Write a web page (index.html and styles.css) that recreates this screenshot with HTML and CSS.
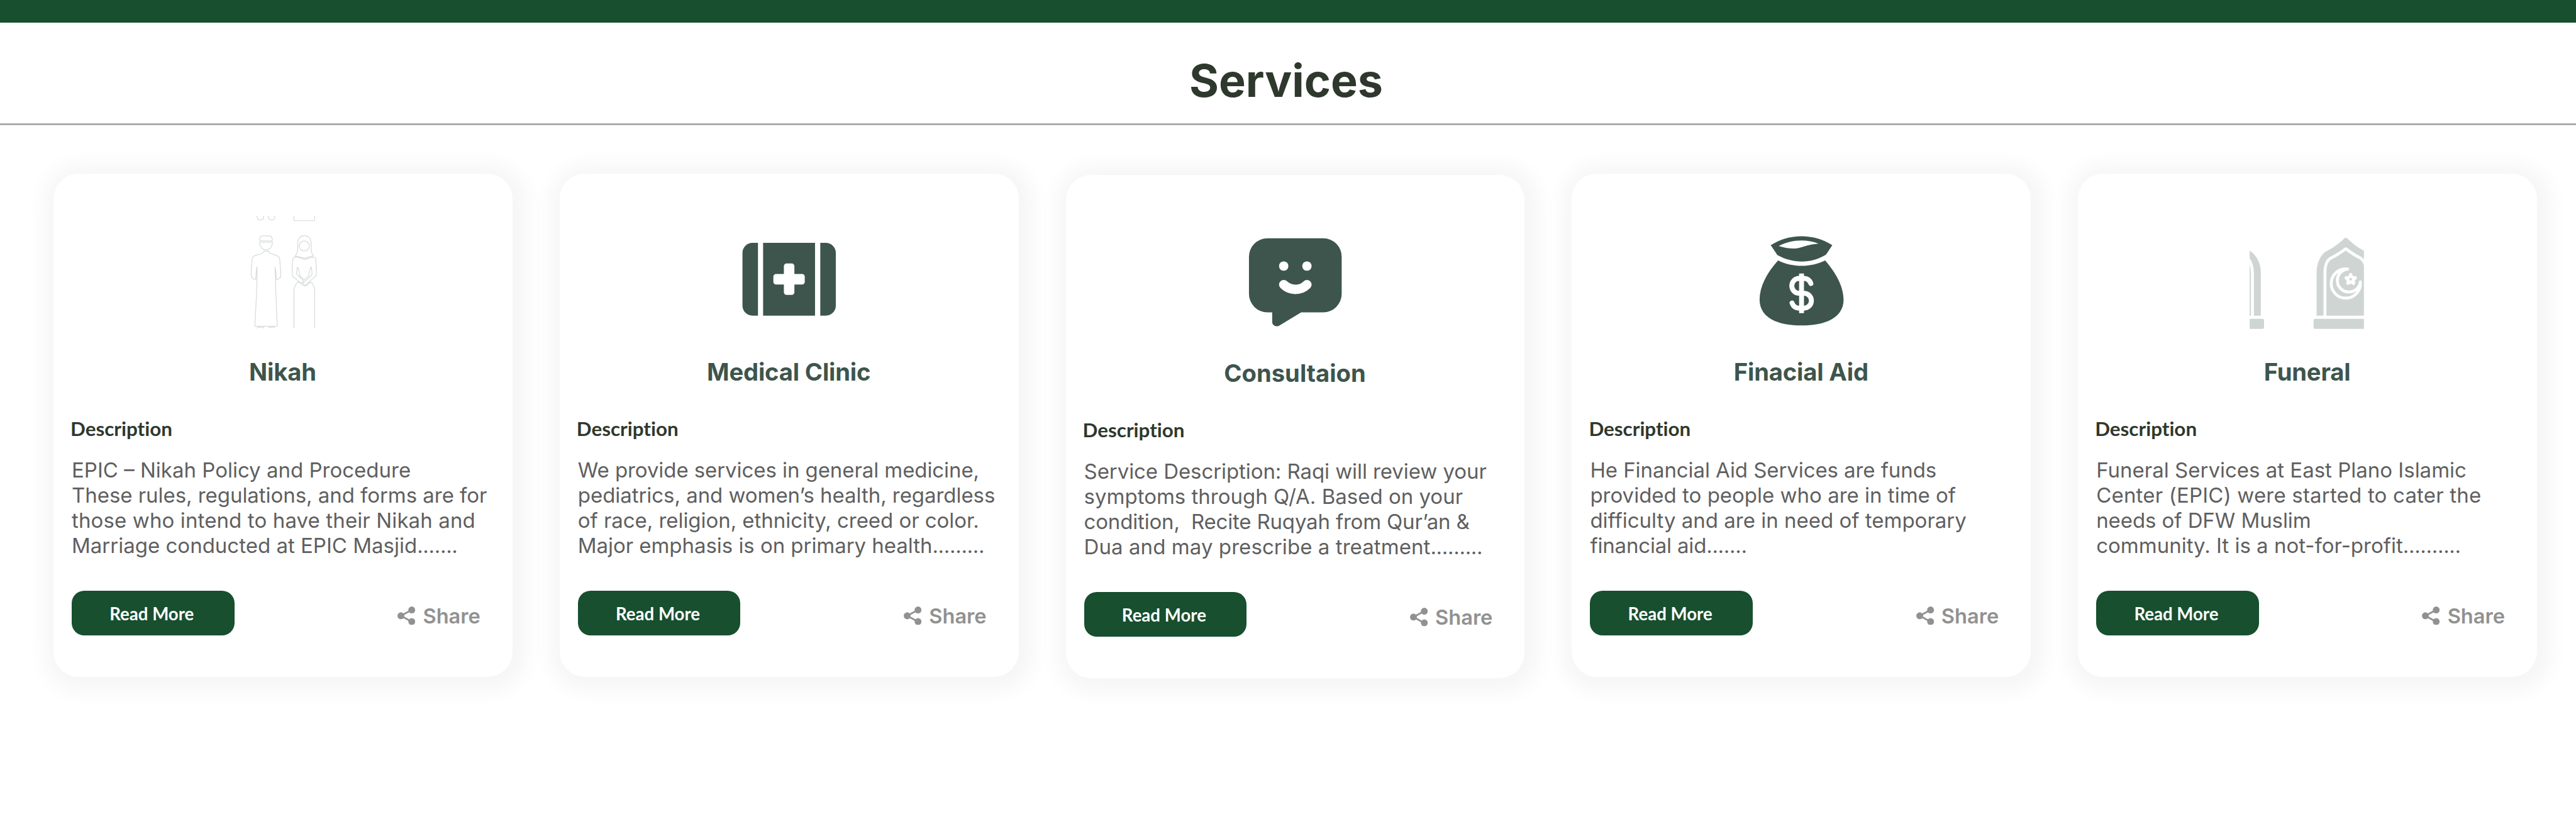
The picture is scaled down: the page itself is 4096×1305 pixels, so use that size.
FILE: index.html
```
<!DOCTYPE html>
<html lang="en">
<head>
<meta charset="utf-8">
<title>Services</title>
<link rel="stylesheet" href="styles.css">
</head>
<body>
<svg class="sprite" aria-hidden="true">
  <symbol id="share" viewBox="0 0 46.4 48.4">
    <path d="M37.3 8.8 9 24.2l28.3 15.4" fill="none" stroke="currentColor" stroke-width="4.6"/>
    <circle cx="9" cy="24.2" r="9"/><circle cx="37.4" cy="9" r="9"/><circle cx="37.4" cy="39.4" r="9"/>
  </symbol>
</svg>

<div class="topbar"></div>
<header class="header"><h1 class="header-title">Services</h1></header>

<main class="cards">
  <article class="card">
    <svg class="card-icon" viewBox="-103.5 60 900 900">
      <clipPath id="nikah-clip"><rect x="0" y="60" width="720" height="877"/></clipPath>
      <g clip-path="url(#nikah-clip)" fill="none" stroke="#d6dbd9" stroke-width="6" stroke-linejoin="round">
        <path d="M146 50V74a26 26 0 0 0 50 0V50M234 50V74a26 26 0 0 0 50 0V50M433 50V92q0 6 6 6H589q6 0 6-6V50"/>
        <path d="M170 255Q164 255 164 249C165 228 172 216 190 216H238C256 216 264 228 265 249Q265 255 259 255Z"/>
        <path d="M168 265H262Q267 265 266 271C262 304 242 325 215 325C188 325 168 304 164 271Q163 265 168 265Z"/>
        <path d="M145 458V520C145 640 136 780 128 914Q127 921 134 921H297Q303 921 303 914C297 780 290 640 286 460"/>
        <path d="M145 458C139 480 137 520 136 550Q135 558 128 556C112 550 99 540 99 520C101 470 104 430 108 396Q110 378 128 371C150 363 172 360 188 352Q194 350 194 341Q194 336 200 336H233Q239 336 239 341Q239 350 245 352C260 359 285 364 304 373Q321 380 322 396C324 430 328 470 331 520C332 540 318 552 303 557Q296 558 295 550C294 520 292 490 286 460"/>
        <path d="M145 940Q148 929 160 929H185Q198 929 199 940M233 940Q236 929 248 929H272Q284 929 285 940"/>
        <path d="M443 376C458 352 463 340 463 310V270C463 236 485 215 514 215C543 215 567 236 567 270V310C567 340 570 352 586 373C570 376 555 377 543 384C525 391 505 391 488 384C475 378 458 377 443 376Z"/>
        <circle cx="514" cy="295" r="39"/>
        <path d="M497 584Q486 586 420 528Q418 450 426 392Q427 383 437 383H465C485 384 495 400 516 400C537 400 548 384 568 384H594Q602 384 603 392Q607 450 608 522Q606 530 524 598Q514 604 507 596Q503 590 507 582L572 522C578 500 571 480 568 458C556 480 549 500 549 524L514 560L478 527C476 500 472 480 461 460C457 480 453 500 454 514L502 562Q512 572 497 584Z"/>
        <path d="M433 940V630Q440 605 460 578Q466 572 474 580C490 588 500 608 518 608C536 608 548 586 562 578Q568 575 572 582Q586 600 595 630V940"/>
      </g>
    </svg>
    <h2 class="card-title">Nikah</h2>
    <h3 class="card-label">Description</h3>
    <p class="card-text">EPIC – Nikah Policy and Procedure<br><span class="snug">These rules, regulations, and forms are for</span><br><span class="open">those who intend to have their Nikah and</span><br>Marriage conducted at EPIC Masjid<span class="dots">.......</span></p>
    <div class="card-actions"><a class="read-more">Read More</a><a class="share"><svg class="share-icon"><use href="#share"/></svg>Share</a></div>
  </article>

  <article class="card">
    <svg class="card-icon" viewBox="63.9 -60 900 900" fill="#3d554d">
      <path d="M271 151V718H228A78 78 0 0 1 150 640V229A78 78 0 0 1 228 151ZM757 151V718H800A78 78 0 0 0 878 640V229A78 78 0 0 0 800 151ZM311 151H716V718H311Z"/>
      <rect x="473" y="312" width="82" height="245" rx="21" fill="#fff"/>
      <rect x="391" y="394" width="245" height="82" rx="21" fill="#fff"/>
    </svg>
    <h2 class="card-title">Medical Clinic</h2>
    <h3 class="card-label">Description</h3>
    <p class="card-text"><span class="tight">We provide services in general medicine,</span><br><span class="snug">pediatrics, and women’s health, regardless</span><br><span class="snug">of race, religion, ethnicity, creed or color.</span><br><span class="snug">Major emphasis is on primary health</span><span class="dots">.........</span></p>
    <div class="card-actions"><a class="read-more">Read More</a><a class="share"><svg class="share-icon"><use href="#share"/></svg>Share</a></div>
  </article>

  <article class="card card-lowered">
    <svg class="card-icon" viewBox="51 -49 900 900" fill="#3d554d">
      <path d="M283 116H718A144 144 0 0 1 862 260V550A144 144 0 0 1 718 694H546L376 797C352 811 320 797 320 768V694H283A144 144 0 0 1 139 550V260A144 144 0 0 1 283 116Z"/>
      <circle cx="410" cy="333" r="36.5" fill="#fff"/><circle cx="591" cy="333" r="36.5" fill="#fff"/>
      <path d="M410 478Q448 515 501 515Q554 515 591 478" fill="none" stroke="#fff" stroke-width="73" stroke-linecap="round"/>
    </svg>
    <h2 class="card-title card-title-open">Consultaion</h2>
    <h3 class="card-label">Description</h3>
    <p class="card-text"><span class="tight">Service Description: Raqi will review your</span><br>symptoms through Q/A. Based on your<br><span class="tighter">condition,&nbsp; Recite Ruqyah from Qur’an &amp;</span><br><span class="loose">Dua and may prescribe a treatment</span><span class="dots">.........</span></p>
    <div class="card-actions"><a class="read-more">Read More</a><a class="share"><svg class="share-icon"><use href="#share"/></svg>Share</a></div>
  </article>

  <article class="card">
    <svg class="card-icon" viewBox="36 -60 900 900" fill="#3d554d">
      <path d="M245 169C390 76 580 76 725 169L676 243C560 314 420 314 297 247Z"/>
      <path d="M307 176C400 125 520 119 618 157C500 168 490 194 425 195Q370 196 307 176Z" fill="#fff"/>
      <path d="M302 288C415 344 555 344 669 288C750 380 813 490 813 595C813 725 690 795 485 795C280 795 158 725 158 595C158 490 215 385 302 288Z"/>
      <path d="M558 468C548 442 529 428 504 428H466A57 58 0 0 0 466 544H504A58 58 0 0 1 504 660H466C441 660 420 645 411 620" fill="none" stroke="#fff" stroke-width="38.500" stroke-linecap="round"/>
      <path d="M466 390H504V699H466Z" fill="#fff"/>
    </svg>
    <h2 class="card-title">Finacial Aid</h2>
    <h3 class="card-label">Description</h3>
    <p class="card-text"><span class="tight">He Financial Aid Services are funds</span><br>provided to people who are in time of<br>difficulty and are in need of temporary<br><span class="tighter">financial aid</span><span class="dots">.......</span></p>
    <div class="card-actions"><a class="read-more">Read More</a><a class="share"><svg class="share-icon"><use href="#share"/></svg>Share</a></div>
  </article>

  <article class="card">
    <svg class="card-icon" viewBox="146.4 -60 900 900" fill="#ced5d2">
      <clipPath id="funeral-clip"><rect x="147" y="0" width="891" height="840"/></clipPath>
      <g clip-path="url(#funeral-clip)">
        <path d="M120 200C190 225 234 300 234 385V712Q234 719 227 719H120Z"/>
        <path d="M168.500 725V390C168 340 160 305 135 275" fill="none" stroke="#fff" stroke-width="23"/>
        <rect x="100" y="743" width="159" height="79" rx="12"/>
        <path d="M669 719V385C669 310 700 240 748 215C800 187 838 162 884 118Q897 106 910 118C950 156 985 185 1038 212L1100 260V719Z"/>
        <path d="M734 725V385C734 325 752 282 786 267C830 246 868 218 897 197C930 224 965 246 1008 268C1030 282 1042 300 1050 330" fill="none" stroke="#fff" stroke-width="23" stroke-linejoin="round"/>
        <rect x="645" y="743" width="500" height="79" rx="12"/>
        <path d="M911 355A114 114 0 1 0 1010 455A90 90 0 1 1 911 355Z" fill="none" stroke="#fff" stroke-width="23" stroke-linejoin="round"/>
        <path d="M935 397 946 419 973 423 955 442 959 468 935 457 911 468 915 442 897 423 924 419Z" fill="#fff" stroke="#fff" stroke-width="22" stroke-linejoin="round"/>
        <path d="M935 423 946 431 942 444H928L924 431Z"/>
      </g>
    </svg>
    <h2 class="card-title">Funeral</h2>
    <h3 class="card-label">Description</h3>
    <p class="card-text">Funeral Services at East Plano Islamic<br><span class="wide">Center (EPIC) were started to cater the</span><br><span class="tight">needs of DFW Muslim</span><br>community. It is a not-for-profit<span class="dots">..........</span></p>
    <div class="card-actions"><a class="read-more">Read More</a><a class="share"><svg class="share-icon"><use href="#share"/></svg>Share</a></div>
  </article>
</main>
</body>
</html>
```
FILE: styles.css
```
* { box-sizing: border-box; }

body {
  margin: 0;
  min-height: 1305px;
  background: #fff;
  font-family: Inter, "Liberation Sans", sans-serif;
}

h1, h2, h3, p { margin: 0; }

.sprite { display: none; }

.topbar {
  height: 36px;
  background: #174f2f;
}

.header {
  height: 163px;
  padding-top: 48px;
  border-bottom: 3px solid #acacac;
  text-align: center;
}

.header-title {
  padding-right: 6px;
  font-size: 71.8px;
  font-weight: 700;
  line-height: 87px;
  color: #2e382d;
}

.cards {
  display: grid;
  grid-template-columns: repeat(5, 729.8px);
  column-gap: 75px;
  align-items: start;
  padding: 77px 0 0 85px;
}

.card {
  display: flex;
  flex-direction: column;
  height: 800px;
  padding: 66.5px 29px 0;
  border-radius: 40px;
  background: #fff;
  box-shadow: 4px 4px 32px 19px rgba(0, 0, 0, 0.04);
}

.card-lowered { margin-top: 2.3px; }

.card-icon {
  width: 183.5px;
  height: 183.5px;
  align-self: center;
}

.card-title {
  margin-top: 42px;
  padding-right: 1px;
  text-align: center;
  font-size: 38.2px;
  font-weight: 700;
  line-height: 46px;
  letter-spacing: -0.17px;
  color: #3d554d;
}

.card-title-open { letter-spacing: 0; }

.card-label {
  margin: 48px 0 0 -2px;
  font-family: Lato, "Liberation Sans", sans-serif;
  font-size: 31.36px;
  font-weight: 700;
  font-variant-ligatures: none;
  line-height: 38px;
  color: #2e382d;
}

.card-text {
  margin-top: 27px;
  font-size: 33px;
  line-height: 40px;
  color: #5f5f5f;
  white-space: nowrap;
}

.open { letter-spacing: 0.12px; }
.wide { letter-spacing: 0.19px; }
.loose { letter-spacing: 0.07px; }
.snug { letter-spacing: -0.05px; }
.tight { letter-spacing: -0.08px; }
.tighter { letter-spacing: -0.18px; }
.dots { letter-spacing: -0.3px; }

.card-actions {
  display: flex;
  justify-content: space-between;
  align-items: flex-start;
  margin-top: 51.5px;
}

.read-more {
  width: 258.5px;
  height: 71px;
  padding-right: 4px;
  border-radius: 20px;
  background: #174f2f;
  color: #fff;
  text-align: center;
  font-family: Lato, "Liberation Sans", sans-serif;
  font-size: 27.6px;
  font-weight: 700;
  line-height: 73px;
}

.share {
  display: flex;
  align-items: center;
  gap: 12px;
  margin: 20px 22px 0 0;
  font-size: 32.6px;
  font-weight: 600;
  line-height: 40px;
  color: #919191;
}

.share-icon {
  width: 28.2px;
  height: 29.6px;
  fill: currentColor;
}
```
